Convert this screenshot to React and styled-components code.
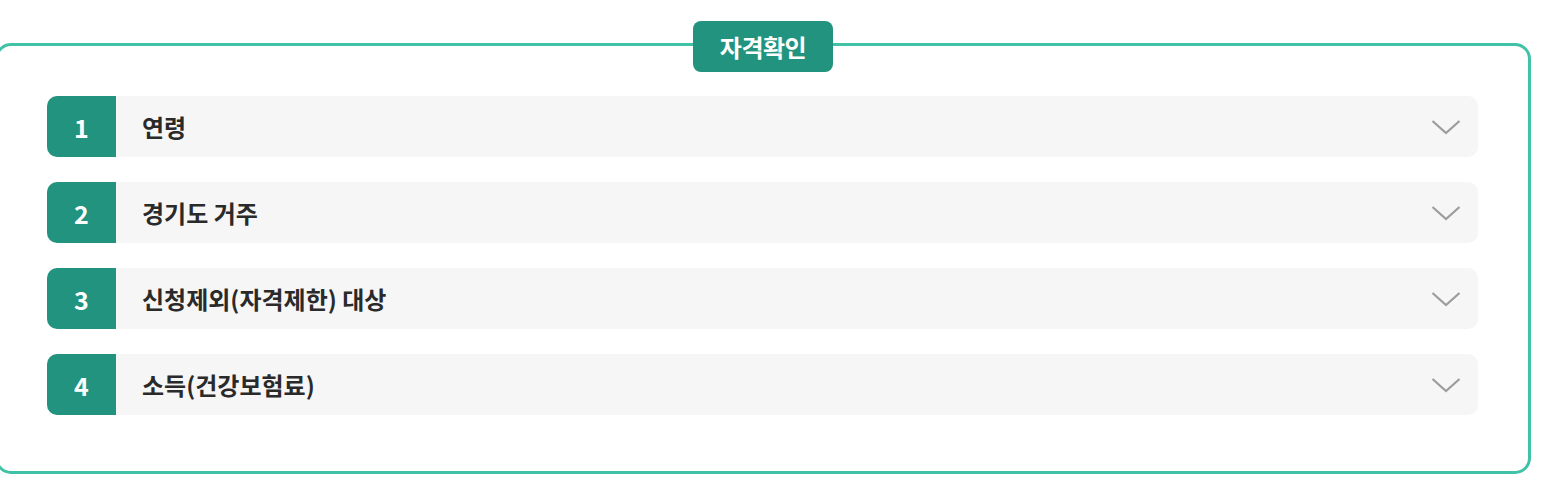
import React from 'react';
import styled, { createGlobalStyle } from 'styled-components';

const Global = createGlobalStyle`
  body {
    margin: 0;
    background: #fff;
    font-family: "Noto Sans CJK KR", "Noto Sans", sans-serif;
  }
`;

const Page = styled.div`
  padding-top: 43px;
`;

const Box = styled.section`
  position: relative;
  box-sizing: border-box;
  margin-left: -5px;
  width: 1536px;
  height: 431px;
  border: 3px solid #40c2a6;
  border-radius: 16px;
  padding: 50px 50px 0 49px;
  display: flex;
  flex-direction: column;
  gap: 25px;
`;

const Badge = styled.h2`
  position: absolute;
  top: -25px;
  left: 50%;
  transform: translateX(-50%);
  margin: 0;
  width: 140px;
  height: 51px;
  border-radius: 8px;
  background: #22937e;
  color: #fff;
  font-size: 24px;
  font-weight: 700;
  letter-spacing: -0.5px;
  display: flex;
  align-items: center;
  justify-content: center;
`;

const Row = styled.div`
  display: flex;
  align-items: center;
  height: 61px;
  border-radius: 10px;
  background: #f6f6f6;
  overflow: hidden;
  cursor: pointer;
`;

const Num = styled.span`
  width: 69px;
  align-self: stretch;
  display: flex;
  align-items: center;
  justify-content: center;
  background: #22937e;
  color: #fff;
  font-size: 25px;
  font-weight: 700;
  font-family: "Noto Sans CJK KR", "Noto Sans", sans-serif;
`;

const Label = styled.span`
  flex: 1;
  padding-left: 26px;
  color: #2a2a2a;
  font-size: 24px;
  font-weight: 600;
`;

const Chevron = styled.svg`
  margin-right: 17px;
`;

const items = ['연령', '경기도 거주', '신청제외(자격제한) 대상', '소득(건강보험료)'];

export default function App() {
  return (
    <Page>
      <Global />
      <Box>
        <Badge>자격확인</Badge>
        {items.map((t, i) => (
          <Row key={t}>
            <Num>{i + 1}</Num>
            <Label>{t}</Label>
            <Chevron width="30" height="16" viewBox="0 0 30 16" fill="none">
              <path d="M1.5 2 L15 14 L28.5 2" stroke="#9d9d9d" strokeWidth="2.3" />
            </Chevron>
          </Row>
        ))}
      </Box>
    </Page>
  );
}
